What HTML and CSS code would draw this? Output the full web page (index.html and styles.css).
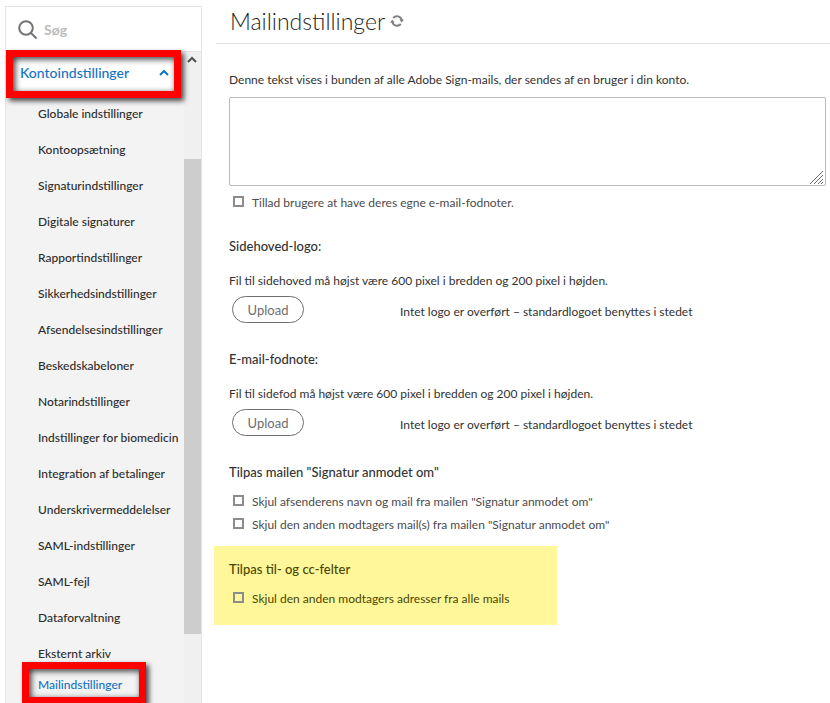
FILE: index.html
```html
<!DOCTYPE html>
<html lang="da">
<head>
    <meta charset="UTF-8">
    <meta name="viewport" content="width=device-width, initial-scale=1.0">
    <title>Mailindstillinger</title>
    <link rel="stylesheet" href="styles.css">
</head>
<body>
    <div class="page">
        <aside class="sidebar">
            <div class="search">
                <svg class="search-icon" viewBox="0 0 20 20" width="20" height="20" aria-hidden="true">
                    <circle cx="8" cy="8" r="6.8"/>
                    <path d="M13 13l5.5 5.5"/>
                </svg>
                <input type="search" class="search-input" placeholder="Søg" aria-label="Søg">
            </div>
            <div class="scroll-area">
                <nav class="nav">
                    <button type="button" class="nav-group" aria-expanded="true">
                        <span>Kontoindstillinger</span>
                        <svg class="chevron" viewBox="0 0 10 6" width="10" height="6" aria-hidden="true"><path d="M1 5l4-4 4 4"/></svg>
                    </button>
                    <ul class="nav-list">
                        <li><a href="#">Globale indstillinger</a></li>
                        <li><a href="#">Kontoopsætning</a></li>
                        <li><a href="#">Signaturindstillinger</a></li>
                        <li><a href="#">Digitale signaturer</a></li>
                        <li><a href="#">Rapportindstillinger</a></li>
                        <li><a href="#">Sikkerhedsindstillinger</a></li>
                        <li><a href="#">Afsendelsesindstillinger</a></li>
                        <li><a href="#">Beskedskabeloner</a></li>
                        <li><a href="#">Notarindstillinger</a></li>
                        <li><a href="#">Indstillinger for biomedicin</a></li>
                        <li><a href="#">Integration af betalinger</a></li>
                        <li><a href="#">Underskrivermeddelelser</a></li>
                        <li><a href="#">SAML-indstillinger</a></li>
                        <li><a href="#">SAML-fejl</a></li>
                        <li><a href="#">Dataforvaltning</a></li>
                        <li><a href="#">Eksternt arkiv</a></li>
                        <li class="active"><a href="#">Mailindstillinger</a></li>
                    </ul>
                </nav>
                <div class="scrollbar" aria-hidden="true">
                    <svg class="scroll-up" viewBox="0 0 10 7" width="10" height="7"><path d="M1 6l4-4 4 4"/></svg>
                    <div class="scroll-thumb"></div>
                </div>
            </div>
        </aside>
        <main class="main">
            <header class="title-bar">
                <h1>Mailindstillinger</h1>
                <button type="button" class="refresh" aria-label="Opdater">
                    <svg viewBox="0 0 14 14" width="14" height="14">
                        <path class="arc" d="M3.200 4A4.900 4.900 0 0 1 11.700 6M10.800 10A4.900 4.900 0 0 1 2.300 8"/>
                        <path class="tip" d="M9.400 5.600h4.600l-2.300 2.800zM0 8.400h4.600l-2.300-2.800z"/>
                    </svg>
                </button>
            </header>
            <form class="settings">
                <section class="group">
                    <label for="footer-text" class="text">Denne tekst vises i bunden af alle Adobe Sign-mails, der sendes af en bruger i din konto.</label>
                    <div class="textarea-wrap">
                        <textarea id="footer-text"></textarea>
                        <svg class="grip" viewBox="0 0 15 15" width="15" height="15" aria-hidden="true"><path d="M1 14L14 1M5 14l9-9M9 14l5-5M12 14l2-2"/></svg>
                    </div>
                    <label class="check"><input type="checkbox">Tillad brugere at have deres egne e-mail-fodnoter.</label>
                </section>
                <section class="group upload-group">
                    <h2>Sidehoved-logo:</h2>
                    <p class="text">Fil til sidehoved må højst være 600 pixel i bredden og 200 pixel i højden.</p>
                    <div class="upload-row">
                        <button type="button" class="upload">Upload</button>
                        <span class="text">Intet logo er overført – standardlogoet benyttes i stedet</span>
                    </div>
                </section>
                <section class="group upload-group">
                    <h2>E-mail-fodnote:</h2>
                    <p class="text">Fil til sidefod må højst være 600 pixel i bredden og 200 pixel i højden.</p>
                    <div class="upload-row">
                        <button type="button" class="upload">Upload</button>
                        <span class="text">Intet logo er overført – standardlogoet benyttes i stedet</span>
                    </div>
                </section>
                <section class="group">
                    <h2>Tilpas mailen "Signatur anmodet om"</h2>
                    <label class="check"><input type="checkbox">Skjul afsenderens navn og mail fra mailen "Signatur anmodet om"</label>
                    <label class="check"><input type="checkbox">Skjul den anden modtagers mail(s) fra mailen "Signatur anmodet om"</label>
                </section>
                <section class="group highlight">
                    <h2>Tilpas til- og cc-felter</h2>
                    <label class="check"><input type="checkbox">Skjul den anden modtagers adresser fra alle mails</label>
                </section>
            </form>
        </main>
    </div>
</body>
</html>
```
FILE: styles.css
```css
* {
    box-sizing: border-box;
}
body {
    margin: 0;
    background: #fff;
    color: #323232;
    font-family: Lato, "Open Sans", sans-serif;
    font-size: 12px;
    line-height: 20px;
}
button,
input,
textarea {
    font: inherit;
}
.page {
    display: grid;
    grid-template-columns: 197px 1fr;
    gap: 14px;
    height: 100vh;
    padding-left: 5px;
    overflow: hidden;
}

/* Sidebar */
.sidebar {
    display: flex;
    flex-direction: column;
    margin-top: 6px;
    min-height: 0;
    border: 1px solid #e4e4e4;
    border-bottom: none;
    background: #f3f3f3;
}
.search {
    display: flex;
    align-items: center;
    gap: 6px;
    height: 45px;
    flex-shrink: 0;
    padding: 2px 12px 0;
    background: #fff;
    border-bottom: 1px solid #e4e4e4;
}
.search-icon {
    flex-shrink: 0;
    fill: none;
    stroke: #747474;
    stroke-width: 2;
}
.search-input {
    width: 100%;
    padding: 0;
    border: none;
    outline: none;
    background: none;
    font-size: 14px;
    font-weight: bold;
}
.search-input::placeholder {
    color: #bcbcbc;
}
.scroll-area {
    display: flex;
    flex: 1;
    min-height: 0;
}
.nav {
    flex: 1;
    min-width: 0;
    font-weight: 500;
}
.nav-group {
    display: flex;
    align-items: center;
    justify-content: space-between;
    width: 175px;
    height: 48px;
    margin-top: -2px;
    padding: 0 5px 2px 7px;
    position: relative;
    border: 7px solid #fe0000;
    background: #fff;
    box-shadow: 3px 3px 5px rgba(0, 0, 0, 0.7), inset 2px 2px 6px rgba(0, 0, 0, 0.8);
    color: #1473c6;
    font-size: 14px;
}
.chevron {
    fill: none;
    stroke: #1473c6;
    stroke-width: 2;
}
.nav-list {
    margin: -2px 0 0;
    padding: 0;
    list-style: none;
}
.nav-list a {
    display: block;
    padding: 8px 0 8px 32px;
    color: #2c2c2c;
    text-decoration: none;
    white-space: nowrap;
}
.nav-list .active a {
    width: 124px;
    margin: -10px 0 0 16px;
    padding: 6px 0 2px 9px;
    border: 7px solid #fe0000;
    box-shadow: 3px 3px 5px rgba(0, 0, 0, 0.7), inset 2px 2px 6px rgba(0, 0, 0, 0.8);
    color: #1473c6;
}
.scrollbar {
    width: 17px;
    background: #f0f0f0;
}
.scroll-up {
    display: block;
    margin: 4px 4px 96px 3px;
    fill: none;
    stroke: #505050;
    stroke-width: 2;
}
.scroll-thumb {
    height: 73%;
    background: #cdcdcd;
}

/* Settings */
.title-bar {
    display: flex;
    align-items: center;
    gap: 5px;
    height: 44px;
    padding: 0 0 2px 14px;
    border-bottom: 1px solid #e1e1e1;
}
.title-bar h1 {
    margin: 0;
    color: #1e1e1e;
    font-size: 23px;
    font-weight: 300;
    line-height: 32px;
}
.refresh {
    display: flex;
    padding: 0;
    border: none;
    background: none;
}
.refresh .arc {
    fill: none;
    stroke: #808080;
    stroke-width: 2;
}
.refresh .tip {
    fill: #808080;
}
.settings {
    padding: 26px 4px 0 0;
}
.group {
    padding-left: 13px;
}
.group h2 {
    margin: 0;
    font-size: 13px;
    font-weight: 500;
    line-height: 20px;
}
.text {
    display: block;
    margin: 0;
}
.textarea-wrap {
    position: relative;
    margin: 7px 0;
}
.textarea-wrap textarea {
    display: block;
    width: 100%;
    height: 89px;
    border: 1px solid #b9b9b9;
    border-radius: 2px;
    resize: none;
}
.grip {
    position: absolute;
    right: 2px;
    bottom: 1px;
    fill: none;
    stroke: #6e6e6e;
}
.check {
    display: flex;
    align-items: center;
    gap: 8px;
    margin-bottom: 3px;
    padding-left: 4px;
    color: #4b4b4b;
}
.check input {
    appearance: none;
    width: 11px;
    height: 11px;
    margin: 0 0 4px;
    border: 2px solid #8c8c8c;
}
.upload-group {
    margin-top: 23px;
}
.upload-group + .group {
    margin-top: 26px;
}
.upload-group .text {
    margin-top: 15px;
}
.upload-row {
    display: flex;
    align-items: center;
    gap: 96px;
    margin-top: 5px;
    padding-left: 3px;
}
.upload-row .text {
    margin-top: 4px;
}
.upload {
    width: 72px;
    height: 27px;
    padding: 0;
    border: 1px solid #6e6e6e;
    border-radius: 14px;
    background: #fff;
    color: #6e6e6e;
    font-size: 13px;
}
.group h2 + .check {
    margin-top: 10px;
}
.group.highlight {
    width: 343px;
    margin: 11px 0 0 -2px;
    padding: 13px 0 13px 15px;
    background: #fff799;
}
.highlight h2,
.highlight .check {
    color: #4a4600;
}
```
